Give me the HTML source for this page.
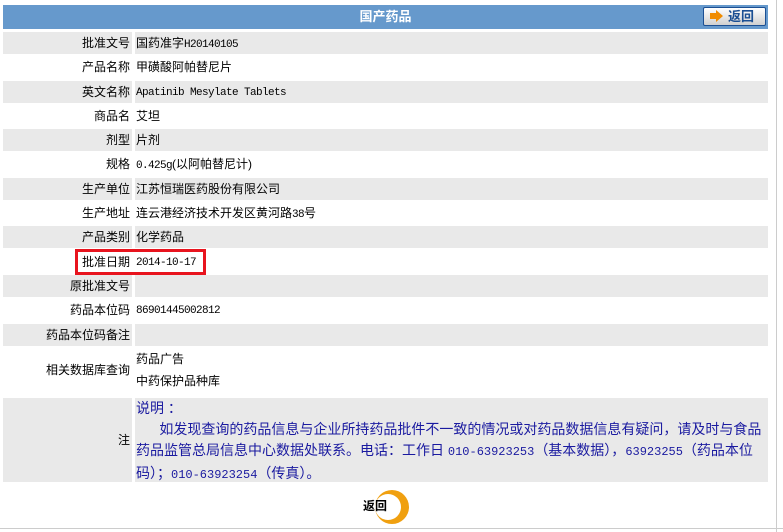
<!DOCTYPE html>
<html><head><meta charset="utf-8"><style>
*{margin:0;padding:0;box-sizing:border-box}
body{width:783px;height:532px;background:#fff;position:relative;overflow:hidden;font-family:"Liberation Sans","Noto Sans CJK SC",sans-serif;font-size:12px;color:#000}
.r{position:absolute;left:3px;width:765px;height:22px}
.l,.v{position:absolute;top:0;height:100%;line-height:22px}
.l{left:0;width:129px;text-align:right;padding-right:2px}
.v{left:132px;right:0;padding-left:1px}
.g .l,.g .v{background:#e9e9e9}
.mono{font-family:"Liberation Mono","Noto Sans CJK SC",monospace;font-size:11px;letter-spacing:-0.6px}
.v.mono{padding-top:1px}
</style></head><body>
<div style="position:absolute;left:3px;top:5px;width:765px;height:24px;background:#6699cc"></div>
<div style="position:absolute;left:3px;top:5px;width:765px;height:24px;line-height:24px;text-align:center;color:#fff;font-weight:bold;font-size:13px">国产药品</div>
<div style="position:absolute;left:703px;top:7px;width:63px;height:19px;border:1px solid #1b4f93;border-radius:2px;background:linear-gradient(#fff,#d0d0d0);"></div>
<svg style="position:absolute;left:710px;top:10px" width="14" height="12"><path d="M0 3h6V0l7 6-7 6V9H0z" fill="#f08c00"/></svg>
<div style="position:absolute;left:728px;top:7px;line-height:20px;font-weight:bold;color:#1b4f93;font-size:13px">返回</div>
<div style="position:absolute;left:776px;top:0;width:1px;height:532px;background:#ccc"></div>

<div class="r g" style="top:32px"><div class="l">批准文号</div><div class="v">国药准字<span class="mono">H20140105</span></div></div>
<div class="r" style="top:56px"><div class="l">产品名称</div><div class="v">甲磺酸阿帕替尼片</div></div>
<div class="r g" style="top:81px"><div class="l">英文名称</div><div class="v mono">Apatinib Mesylate Tablets</div></div>
<div class="r" style="top:105px"><div class="l">商品名</div><div class="v">艾坦</div></div>
<div class="r g" style="top:129px"><div class="l">剂型</div><div class="v">片剂</div></div>
<div class="r" style="top:153px"><div class="l">规格</div><div class="v"><span class="mono">0.425g</span>(以阿帕替尼计)</div></div>
<div class="r g" style="top:178px"><div class="l">生产单位</div><div class="v">江苏恒瑞医药股份有限公司</div></div>
<div class="r" style="top:202px"><div class="l">生产地址</div><div class="v">连云港经济技术开发区黄河路<span class="mono">38</span>号</div></div>
<div class="r g" style="top:226px"><div class="l">产品类别</div><div class="v">化学药品</div></div>
<div class="r" style="top:251px"><div class="l">批准日期</div><div class="v mono">2014-10-17</div></div>
<div class="r g" style="top:275px"><div class="l">原批准文号</div><div class="v"></div></div>
<div class="r" style="top:299px"><div class="l">药品本位码</div><div class="v mono">86901445002812</div></div>
<div class="r g" style="top:324px"><div class="l">药品本位码备注</div><div class="v"></div></div>
<div class="r" style="top:347px;height:46px"><div class="l" style="line-height:46px">相关数据库查询</div><div class="v" style="line-height:22px;padding-top:1px">药品广告<br>中药保护品种库</div></div>
<div class="r g" style="top:398px;height:84px"><div class="l" style="line-height:84px">注</div><div class="v" style="color:#1a1aa0;font-size:14px;line-height:21px;padding-top:0">说明 ：<br>&nbsp;&nbsp;&nbsp;&nbsp;&nbsp;&nbsp;如发现查询的药品信息与企业所持药品批件不一致的情况或对药品数据信息有疑问，请及时与食品药品监管总局信息中心数据处联系。电话：工作日 <span class="mono" style="font-size:12px;letter-spacing:0">010-63923253</span>（基本数据），<span class="mono" style="font-size:12px;letter-spacing:0">63923255</span>（药品本位码）；<span class="mono" style="font-size:12px;letter-spacing:0">010-63923254</span>（传真）。</div></div>

<div style="position:absolute;left:75px;top:249px;width:131px;height:26px;border:3px solid #e8141e"></div>

<svg style="position:absolute;left:372px;top:490px" width="40" height="34"><circle cx="20" cy="17" r="17" fill="#f0a010"/><circle cx="16" cy="17" r="13" fill="#fff"/></svg>
<div style="position:absolute;left:363px;top:497px;font-weight:bold;font-size:12px;line-height:18px">返回</div>
<div style="position:absolute;left:0;top:528px;width:783px;height:1px;background:#ccc"></div>
</body></html>
